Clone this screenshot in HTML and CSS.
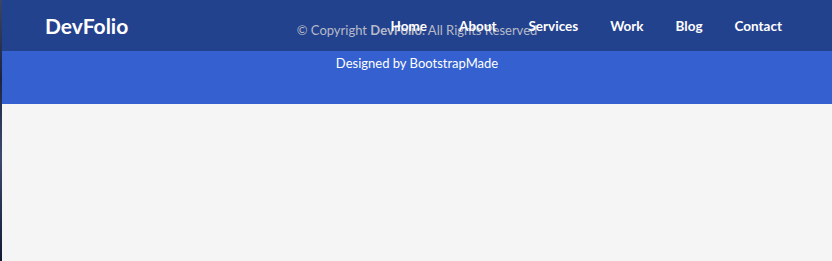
FILE: index.html
```html
<!DOCTYPE html>
<html lang="en">
<head>
<meta charset="utf-8">
<title>DevFolio</title>
<link rel="stylesheet" href="styles.css">
</head>
<body>
<div class="frame">
  <div class="edge"></div>
  <div class="page">
    <header class="navbar">
      <a class="brand" href="#">DevFolio</a>
      <nav class="menu">
        <a href="#">Home</a>
        <a href="#">About</a>
        <a href="#">Services</a>
        <a href="#">Work</a>
        <a href="#">Blog</a>
        <a href="#">Contact</a>
      </nav>
    </header>
    <footer class="footer">
      <div class="footer-top">
        <p class="copyright">© Copyright <strong>DevFolio</strong>. All Rights Reserved</p>
      </div>
      <div class="footer-bottom">
        <p class="credits">Designed by BootstrapMade</p>
      </div>
    </footer>
    <main class="content"></main>
  </div>
</div>
</body>
</html>
```
FILE: styles.css
```css
* { box-sizing: border-box; }
html, body { margin: 0; padding: 0; height: 100%; }
body {
  font-family: Lato, "Open Sans", sans-serif;
  background: #f5f5f5;
}
.frame {
  display: flex;
  min-height: 100%;
}
.edge {
  width: 2px;
  flex: none;
  background: linear-gradient(#3a4668, #1c2440 30%, #3c4a70 60%, #131a33);
}
.page {
  flex: 1;
  position: relative;
  display: flex;
  flex-direction: column;
}
.navbar {
  position: absolute;
  top: 0;
  left: 0;
  right: 0;
  height: 51px;
  display: flex;
  align-items: center;
  justify-content: space-between;
  padding: 0 50px 0 43px;
  z-index: 2;
}
.brand {
  color: #fff;
  font-weight: 700;
  font-size: 21px;
  text-decoration: none;
  margin-top: -1px;
}
.menu {
  display: flex;
  gap: 32px;
  margin-top: 1px;
}
.menu a {
  color: #fff;
  font-weight: 700;
  font-size: 13.5px;
  text-decoration: none;
}
.footer-top {
  height: 51px;
  background: #23428e;
  display: flex;
  align-items: center;
  justify-content: center;
  padding-top: 9px;
}
.footer-bottom {
  height: 53px;
  background: #3461cf;
  display: flex;
  justify-content: center;
  padding-top: 4px;
}
.copyright {
  margin: 0;
  color: #b6bac8;
  font-size: 13px;
}
.copyright strong { font-weight: 700; }
.credits {
  margin: 0;
  color: #fff;
  font-size: 13px;
}
.content { flex: 1; background: #f5f5f5; }
```
